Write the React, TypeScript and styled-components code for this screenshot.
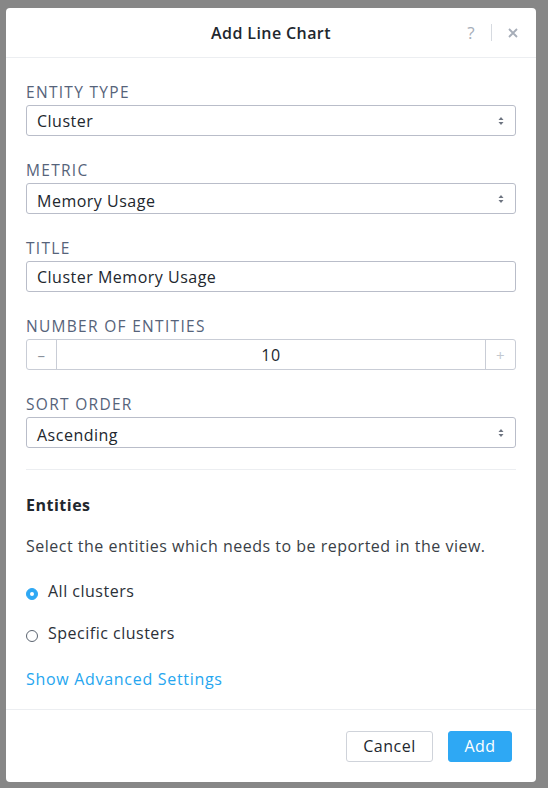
import React from 'react';
import styled, { createGlobalStyle } from 'styled-components';

const GlobalStyle = createGlobalStyle`
  html, body {
    margin: 0;
    padding: 0;
    background: #878787;
  }
  body {
    font-family: "Open Sans", Lato, sans-serif;
    letter-spacing: 0.5px;
    -webkit-font-smoothing: antialiased;
  }
`;

const Page = styled.div`
  padding: 8px 12px 6px 6px;
  height: 788px;
  box-sizing: border-box;
`;

const Modal = styled.div`
  width: 530px;
  height: 774px;
  background: #fff;
  border-radius: 4px;
  display: flex;
  flex-direction: column;
  box-sizing: border-box;
`;

const Header = styled.div`
  position: relative;
  height: 49px;
  border-bottom: 1px solid #eceef1;
  display: flex;
  align-items: center;
  justify-content: center;
  flex-shrink: 0;
`;

const Title = styled.div`
  font-size: 16px;
  font-weight: 600;
  color: #22272e;
  letter-spacing: 0.4px;
`;

const HeaderTools = styled.div`
  position: absolute;
  right: 18px;
  top: 0;
  height: 100%;
  display: flex;
  align-items: center;
  gap: 16px;
  color: #a6adb8;
  font-size: 17px;
`;

const ToolDivider = styled.span`
  width: 1px;
  height: 17px;
  background: #d6dae0;
`;

const Body = styled.div`
  flex: 1;
  padding: 24px 20px 0 20px;
  display: flex;
  flex-direction: column;
`;

const Form = styled.div`
  display: flex;
  flex-direction: column;
  gap: 24px;
`;

const Field = styled.div`
  display: flex;
  flex-direction: column;
  gap: 3px;
`;

const Label = styled.div`
  font-size: 15.5px;
  color: #56637a;
  line-height: 20px;
  letter-spacing: 1.3px;
`;

const Box = styled.div`
  height: 31px;
  border: 1.5px solid #b9bdc9;
  border-radius: 3px;
  box-sizing: border-box;
  display: flex;
  align-items: center;
  font-size: 16px;
  color: #22272e;
  overflow: hidden;
`;

const BoxText = styled.div<{ $low?: boolean }>`
  flex: 1;
  padding-left: 10px;
  padding-top: ${(p) => (p.$low ? '5px' : '1px')};
  line-height: 20px;
`;

const Caret = styled.svg`
  margin-right: 11px;
`;

const Stepper = styled.div`
  height: 31px;
  border: 1px solid #c9cdd6;
  border-radius: 3px;
  box-sizing: border-box;
  display: flex;
  align-items: stretch;
`;

const StepButton = styled.div<{ $side: 'left' | 'right'; $faded?: boolean }>`
  width: 29px;
  display: flex;
  align-items: center;
  justify-content: center;
  color: ${(p) => (p.$faded ? '#c3c8d0' : '#8a919c')};
  font-size: 15px;
  ${(p) => (p.$side === 'left' ? 'border-right' : 'border-left')}: 1px solid #c9cdd6;
`;

const StepValue = styled.div`
  flex: 1;
  display: flex;
  align-items: center;
  justify-content: center;
  font-size: 16px;
  color: #22272e;
  padding-top: 1px;
`;

const Divider = styled.div`
  height: 1px;
  background: #eceef1;
  margin: 21px 0 25px;
`;

const SectionTitle = styled.div`
  font-size: 16px;
  font-weight: 700;
  line-height: 20px;
  color: #22272e;
  margin-bottom: 21px;
`;

const Description = styled.div`
  font-size: 16px;
  line-height: 20px;
  color: #3a3f47;
  margin-bottom: 25px;
`;

const RadioRow = styled.label`
  display: flex;
  align-items: center;
  gap: 10px;
  font-size: 16px;
  line-height: 20px;
  color: #2b3038;
  margin-bottom: 22px;
`;

const RadioDot = styled.span<{ $checked?: boolean }>`
  width: 12px;
  height: 12px;
  border-radius: 50%;
  box-sizing: border-box;
  margin-top: 6px;
  background: ${(p) => (p.$checked ? '#2ea8f4' : '#fff')};
  border: 1px solid ${(p) => (p.$checked ? '#2ea8f4' : '#5b6470')};
  display: flex;
  align-items: center;
  justify-content: center;
  &::after {
    content: '';
    width: 4px;
    height: 4px;
    border-radius: 50%;
    background: #fff;
    display: ${(p) => (p.$checked ? 'block' : 'none')};
  }
`;

const Link = styled.a`
  font-size: 16px;
  line-height: 20px;
  color: #26a6ef;
  text-decoration: none;
  letter-spacing: 0.7px;
  margin-top: 4px;
`;

const Footer = styled.div`
  height: 72px;
  border-top: 1px solid #eceef1;
  display: flex;
  align-items: center;
  justify-content: flex-end;
  gap: 15px;
  padding: 0 24px 0 0;
  flex-shrink: 0;
`;

const Button = styled.button<{ $primary?: boolean }>`
  height: 31px;
  padding: 0 10px;
  min-width: ${(p) => (p.$primary ? '64px' : '87px')};
  border-radius: 3px;
  font-family: inherit;
  font-size: 16px;
  letter-spacing: 0.5px;
  cursor: pointer;
  background: ${(p) => (p.$primary ? '#2ea8f4' : '#fff')};
  color: ${(p) => (p.$primary ? '#fff' : '#22272e')};
  border: 1.5px solid ${(p) => (p.$primary ? '#2ea8f4' : '#cfd3da')};
`;

const SortCaret: React.FC = () => (
  <Caret width="6" height="10" viewBox="0 0 6 10">
    <path d="M3 1 L5.5 4 H0.5 Z" fill="#6d7480" />
    <path d="M3 9 L5.5 6 H0.5 Z" fill="#6d7480" />
  </Caret>
);

const SelectBox: React.FC<{ value: string; low?: boolean }> = ({ value, low }) => (
  <Box>
    <BoxText $low={low}>{value}</BoxText>
    <SortCaret />
  </Box>
);

const App: React.FC = () => (
  <>
    <GlobalStyle />
    <Page>
      <Modal>
        <Header>
          <Title>Add Line Chart</Title>
          <HeaderTools>
            <span>?</span>
            <ToolDivider />
            <svg width="10" height="10" viewBox="0 0 10 10">
              <path d="M1 1 L9 9 M9 1 L1 9" stroke="#a6adb8" strokeWidth="1.8" />
            </svg>
          </HeaderTools>
        </Header>
        <Body>
          <Form>
            <Field>
              <Label>ENTITY TYPE</Label>
              <SelectBox value="Cluster" />
            </Field>
            <Field>
              <Label>METRIC</Label>
              <SelectBox value="Memory Usage" low />
            </Field>
            <Field>
              <Label>TITLE</Label>
              <Box>
                <BoxText>Cluster Memory Usage</BoxText>
              </Box>
            </Field>
            <Field>
              <Label>NUMBER OF ENTITIES</Label>
              <Stepper>
                <StepButton $side="left">–</StepButton>
                <StepValue>10</StepValue>
                <StepButton $side="right" $faded>
                  +
                </StepButton>
              </Stepper>
            </Field>
            <Field>
              <Label>SORT ORDER</Label>
              <SelectBox value="Ascending" low />
            </Field>
          </Form>
          <Divider />
          <SectionTitle>Entities</SectionTitle>
          <Description>Select the entities which needs to be reported in the view.</Description>
          <RadioRow>
            <RadioDot $checked />
            All clusters
          </RadioRow>
          <RadioRow>
            <RadioDot />
            Specific clusters
          </RadioRow>
          <Link href="#">Show Advanced Settings</Link>
        </Body>
        <Footer>
          <Button>Cancel</Button>
          <Button $primary>Add</Button>
        </Footer>
      </Modal>
    </Page>
  </>
);

export default App;
